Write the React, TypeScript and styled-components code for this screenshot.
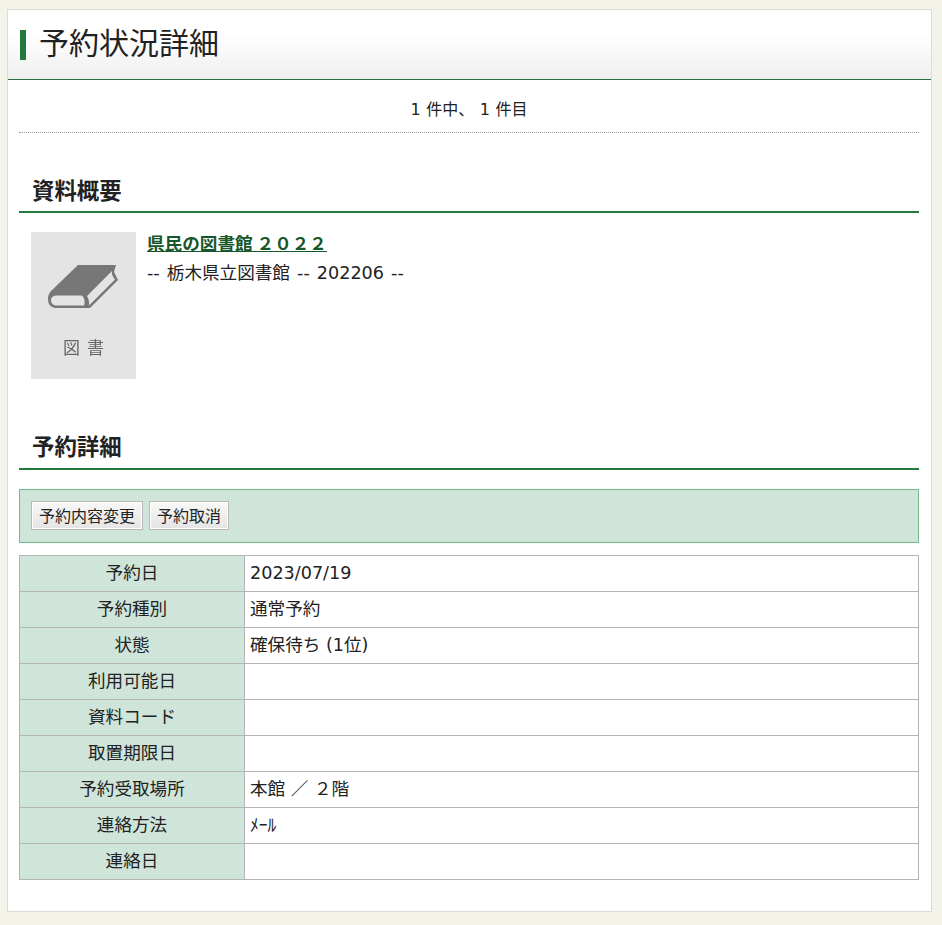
import React from "react";
import styled, { createGlobalStyle } from "styled-components";

const Global = createGlobalStyle`
  html, body { margin: 0; padding: 0; background: #f3f3ea; }
  body { font-family: "DejaVu Sans", "Noto Sans CJK JP", sans-serif; color: #222; font-size: 17.6px; }
`;
const Page = styled.div`
  padding: 9px 10px 13px 7px;
`;
const Card = styled.main`
  height: 901px;
  background: #fff;
  border: 1px solid #dddcd2;
`;
const TitleBar = styled.header`
  height: 69px;
  box-sizing: content-box;
  display: flex;
  align-items: center;
  padding-left: 12px;
  background: linear-gradient(#fff 0%, #fff 35%, #efefef 100%);
  border-bottom: 1px solid #2d6b3f;
`;
const Title = styled.h1`
  margin: 0;
  padding-left: 13px;
  border-left: 6px solid #23793d;
  font-size: 30px;
  font-weight: 400;
  line-height: 22px;
  height: 30px;
  font-family: "Noto Sans CJK JP", sans-serif;
`;
const Body = styled.div`
  padding: 0 12px 0 11px;
`;
const Pager = styled.div`
  height: 53px;
  box-sizing: border-box;
  border-bottom: 1px dotted #999;
  padding-top: 19px;
  font-size: 16px;
  line-height: 22px;
  word-spacing: 0.5px;
  text-align: center;
`;
const SectionHeading = styled.h2<{ $top: number; $height: number }>`
  margin: ${(p) => p.$top}px 0 0;
  height: ${(p) => p.$height}px;
  box-sizing: border-box;
  padding: 9px 0 0 13px;
  border-bottom: 2px solid #23793d;
  font-size: 22.4px;
  line-height: 30px;
  font-weight: 700;
  font-family: "Noto Sans CJK JP", sans-serif;
`;
const Material = styled.section`
  display: flex;
  gap: 11px;
  margin: 19px 0 0 12px;
  height: 147px;
`;
const Cover = styled.figure`
  margin: 0;
  width: 105px;
  height: 147px;
  background: #e4e4e4;
  display: flex;
  flex-direction: column;
  align-items: center;
`;
const BookIcon = styled.svg`
  display: block;
  flex: none;
`;
const CoverLabel = styled.figcaption`
  font-family: "Noto Sans CJK JP", sans-serif;
  font-size: 17px;
  line-height: 20px;
  letter-spacing: 7px;
  margin: -2px 0 0 7px;
  color: #666;
  filter: blur(0.5px);
`;
const Info = styled.div`
  padding-top: 0;
`;
const BookLink = styled.a`
  display: block;
  margin-top: -1px;
  color: #17572a;
  font-size: 17.6px;
  font-weight: 700;
  line-height: 24px;
  text-decoration: underline;
  font-family: "Noto Sans CJK JP", sans-serif;
`;
const Meta = styled.p`
  margin: 6px 0 0;
  font-size: 17.6px;
  line-height: 24px;
  word-spacing: 1.5px;
`;
const Actions = styled.div`
  display: flex;
  gap: 6px;
  align-items: center;
  margin-top: 19px;
  height: 54px;
  box-sizing: border-box;
  padding: 0 11px 2px;
  background: #cfe5da;
  border: 1px solid #6fbb8b;
`;
const Button = styled.button`
  height: 29px;
  box-sizing: border-box;
  padding: 0 7px;
  border: 1px solid #b9b9b9;
  box-shadow: inset 0 0 0 1px #fff;
  background: linear-gradient(#f8f8f8, #e4e4e4);
  color: #222;
  font-size: 16px;
  font-family: "Noto Sans CJK JP", sans-serif;
  line-height: 1;
`;
const Table = styled.table`
  width: 100%;
  margin-top: 12px;
  border-collapse: collapse;
  table-layout: fixed;
  font-size: 17.6px;
`;
const Row = styled.tr`
  height: 36px;
`;
const Th = styled.th`
  width: 225px;
  box-sizing: border-box;
  padding: 3px 0 0;
  border: 1px solid #b5b5b5;
  background: #cfe5da;
  font-weight: 400;
  text-align: center;
  vertical-align: baseline;
`;
const Td = styled.td`
  padding: 3px 5px 0;
  border: 1px solid #b5b5b5;
  vertical-align: baseline;
`;

const rows: [string, string][] = [
  ["予約日", "2023/07/19"],
  ["予約種別", "通常予約"],
  ["状態", "確保待ち (1位)"],
  ["利用可能日", ""],
  ["資料コード", ""],
  ["取置期限日", ""],
  ["予約受取場所", "本館 ／ ２階"],
  ["連絡方法", "ﾒｰﾙ"],
  ["連絡日", ""],
];

export default function App() {
  return (
    <>
      <Global />
      <Page>
        <Card>
          <TitleBar>
            <Title>予約状況詳細</Title>
          </TitleBar>
          <Body>
            <Pager>1 件中、 1 件目</Pager>
            <SectionHeading $top={32} $height={48}>資料概要</SectionHeading>
            <Material>
              <Cover>
                <BookIcon width="105" height="107" viewBox="0 0 105 107">
                  <path
                    d="M47 33 L85 33 L83 40 L87 48 L59 76 L24 76 Q17 75 17 67 Q17 62 20 59 Z"
                    fill="#777"
                  />
                  <path d="M25 63.5 L51 63.5 Q55 68 53 73.5 L25 73.5 Q20 73 20 68 Q20 64 25 63.5 Z" fill="#e4e4e4" />
                  <path d="M56 64 L81 39 Q80 43 84 47.5 L58 73.5 Q58.500 68 56 64 Z" fill="#e4e4e4" />
                </BookIcon>
                <CoverLabel>図書</CoverLabel>
              </Cover>
              <Info>
                <BookLink href="#">県民の図書館 ２０２２</BookLink>
                <Meta>-- 栃木県立図書館 -- 202206 --</Meta>
              </Info>
            </Material>
            <SectionHeading $top={42} $height={49}>予約詳細</SectionHeading>
            <Actions>
              <Button>予約内容変更</Button>
              <Button>予約取消</Button>
            </Actions>
            <Table>
              <tbody>
                {rows.map(([k, v]) => (
                  <Row key={k}>
                    <Th>{k}</Th>
                    <Td>{v}</Td>
                  </Row>
                ))}
              </tbody>
            </Table>
          </Body>
        </Card>
      </Page>
    </>
  );
}
